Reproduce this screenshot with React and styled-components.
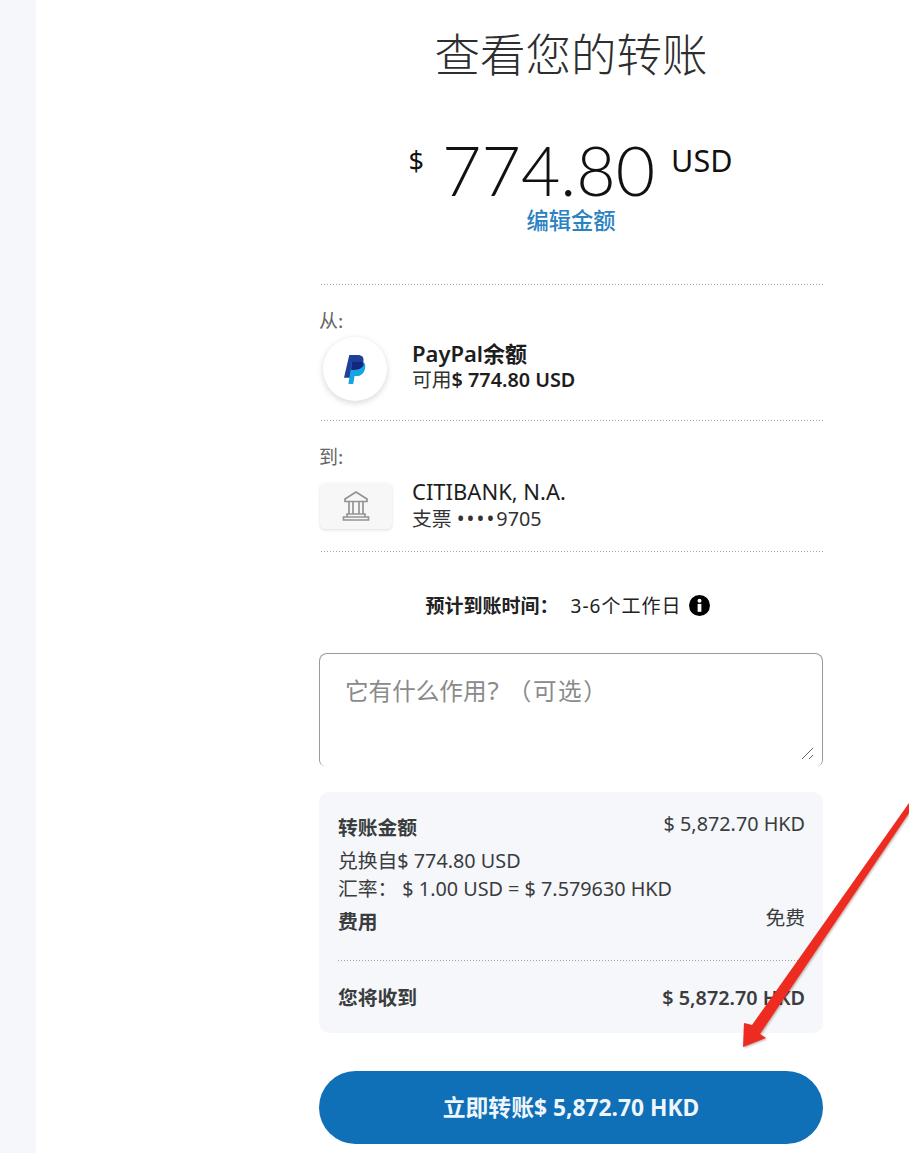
import React from "react";
import styled, { createGlobalStyle } from "styled-components";

const Global = createGlobalStyle`
  html, body { margin: 0; padding: 0; background: #fff; }
  body { font-family: "Noto Sans", "Noto Sans CJK SC", sans-serif; color: #2c2e2f; }
`;
const Page = styled.div`
  position: relative; width: 909px; height: 1153px; overflow: hidden;
  display: flex; background: #fff;
`;
const Rail = styled.div`width: 36px; background: #f5f7fa; flex: none;`;
const Column = styled.main`
  width: 504px; margin-left: 283px; display: flex; flex-direction: column;
`;
const Title = styled.h1`
  margin: 22px 0 0; height: 60px; font: 300 45.500px/60px "Noto Sans CJK SC", sans-serif;
  text-align: center; color: #2c2e2f;
`;
const Amount = styled.div`
  margin-top: 48px; height: 76px; display: flex; justify-content: center; align-items: flex-start;
  color: #111; padding-right: 3px;
`;
const Currency = styled.span`font: 400 27px/30px "Noto Sans", sans-serif; margin-top: 16px; margin-left: 2px;`;
const Digits = styled.span`font: 300 68px/60px Lato, sans-serif; margin: 10px 16px 0 18px;`;
const Code = styled.span`font: 400 30.500px/30px "Noto Sans", sans-serif; margin-top: 15px;`;
const EditLink = styled.a`
  text-align: center; font: 500 22.300px/24px "Noto Sans CJK SC", sans-serif; color: #2a82c2; margin-top: 1px;
`;
const Divider = styled.div`
  height: 1px; margin: ${p => p.$top}px 0 0 2px;
  background: repeating-linear-gradient(90deg, #a6a6a6 0 1.500px, transparent 1.500px 3px);
`;
const Label = styled.div`
  font: 400 19px/22px "Noto Sans CJK SC", sans-serif; color: #666; margin-top: ${p => p.$top}px; height: 22px;
`;
const Party = styled.div`display: flex; align-items: center; margin-top: ${p => p.$top}px;`;
const LogoCircle = styled.div`
  width: 64px; height: 64px; border-radius: 50%; background: #fff; margin-left: 4px; margin-right: 25px;
  box-shadow: 0 2px 6px rgba(0,0,0,.16); display: flex; align-items: center; justify-content: center; flex: none;
`;
const BankTile = styled.div`
  width: 72px; height: 46px; border-radius: 5px; background: #f7f7f7; margin-left: 1px; margin-right: 20px;
  box-shadow: 0 1px 3px rgba(0,0,0,.14); display: flex; align-items: center; justify-content: center; flex: none;
`;
const PartyText = styled.div`display: flex; flex-direction: column; padding-bottom: ${p => p.$pad}px;`;
const PartyName = styled.div`
  font: ${p => p.$bold ? 600 : 400} 22px/28px "Noto Sans", "Noto Sans CJK SC", sans-serif; color: #1d1d1d;
`;
const PartySub = styled.div`
  font: 400 19.800px/26px "Noto Sans", "Noto Sans CJK SC", sans-serif; color: #333;
  b { font-weight: 600; color: #1d1d1d; }
`;
const Mask = styled.span`font-size: 21px; letter-spacing: 2px;`;
const Eta = styled.div`
  margin-top: 39px; height: 30px; display: flex; align-items: center; justify-content: center; padding-right: 6px;
  font: 400 19px/30px "Noto Sans", "Noto Sans CJK SC", sans-serif; color: #222;
  b { font-weight: 700; margin-right: 12px; }
  svg { margin-left: 8px; margin-bottom: 2px; }
`;
const EtaValue = styled.span`letter-spacing: 1px;`;
const NoteBox = styled.div`
  position: relative; margin-top: 32px; height: 113px; border: 1px solid #9a9a9a; border-bottom: 0;
  border-radius: 8px 8px 6px 6px; padding: 21px 25px 0; box-sizing: border-box;
  font: 400 23.600px/30px "Noto Sans", "Noto Sans CJK SC", sans-serif; color: #8a8a8a;
`;
const Question = styled.span`font-size: 26px; margin-left: 1px;`;
const Optional = styled.span`letter-spacing: 1.500px; margin-left: 9px;`;
const Grip = styled.svg`position: absolute; right: 7px; bottom: 6px;`;
const Summary = styled.section`
  margin-top: 26px; height: 241px; background: #f5f7fa; border-radius: 10px; padding: 21px 18px 0 19px;
  box-sizing: border-box; display: flex; flex-direction: column; color: #3a3c3e;
  font: 400 19.800px/29px "Noto Sans", "Noto Sans CJK SC", sans-serif;
`;
const Row = styled.div`
  display: flex; justify-content: space-between; height: ${p => p.$h || 29}px;
  font-weight: ${p => p.$bold ? 600 : 400};
`;
const RowEnd = styled.span`margin-top: ${p => p.$up || 0}px;`;
const SummaryRule = styled.div`
  height: 1px; margin: 24px 0 22px;
  background: repeating-linear-gradient(90deg, #a6a6a6 0 1.500px, transparent 1.500px 3px);
`;
const Strong = styled.span`font-weight: 600;`;
const Rate = styled.span`margin-left: 5px;`;
const PayButton = styled.button`
  margin-top: 38px; height: 73px; border: 0; border-radius: 37px; background: #0f6fb7; color: #eef6fc;
  font: 700 22.800px/73px "Noto Sans", "Noto Sans CJK SC", sans-serif; padding: 0; flex: none;
`;
const Arrow = styled.svg`
  position: absolute; left: 730px; top: 790px;
  filter: drop-shadow(1px 1px 1px rgba(90,40,30,.4));
`;

export default function App() {
  return (
    <Page>
      <Global />
      <Rail />
      <Column>
        <Title>查看您的转账</Title>
        <Amount>
          <Currency>$</Currency>
          <Digits>774.80</Digits>
          <Code>USD</Code>
        </Amount>
        <EditLink>编辑金额</EditLink>
        <Divider $top={53} />
        <Label $top={24}>从:</Label>
        <Party $top={6}>
          <LogoCircle>
            <svg width="22" height="29" viewBox="0 0 25 33">
              <path d="M6 0h9c6 0 8 3 7 8-1 6-5 9-11 9H9l-1.500 9H0z" fill="#1f3f98" />
              <path d="M9 7h9c5 0 7 3 6 8-1 6-5 9-10 9h-2l-1.500 9H5z" fill="#17a4e6" />
              <path d="M9 7h11c2 1 2.500 3 2 5-1.500 3-5 5-11 5H8z" fill="#13277f" />
            </svg>
          </LogoCircle>
          <PartyText $pad={6}>
            <PartyName $bold>PayPal余额</PartyName>
            <PartySub>可用<b>$ 774.80 USD</b></PartySub>
          </PartyText>
        </Party>
        <Divider $top={19} />
        <Label $top={24}>到:</Label>
        <Party $top={10}>
          <BankTile>
            <svg width="28" height="32" viewBox="0 0 28 32" fill="none" stroke="#949494" strokeWidth="1.700">
              <path d="M14 2 3 9v2.500h22V9z" />
              <path d="M7 11.500V24M11 11.500V24M17 11.500V24M21 11.500V24" />
              <path d="M5 24h18v3H5zM1.500 27h25v3h-25z" />
            </svg>
          </BankTile>
          <PartyText $pad={2}>
            <PartyName>CITIBANK, N.A.</PartyName>
            <PartySub>支票 <Mask>••••</Mask>9705</PartySub>
          </PartyText>
        </Party>
        <Divider $top={17} />
        <Eta>
          <b>预计到账时间：</b><EtaValue>3-6个工作日</EtaValue>
          <svg width="21" height="21" viewBox="0 0 20 20">
            <circle cx="10" cy="10" r="10" fill="#000" />
            <rect x="8.200" y="8.500" width="3.600" height="7.500" fill="#fff" />
            <circle cx="10" cy="5.500" r="1.900" fill="#fff" />
          </svg>
        </Eta>
        <NoteBox>
          它有什么作用<Question>?</Question><Optional>（可选）</Optional>
          <Grip width="14" height="14" viewBox="0 0 14 14" stroke="#666" fill="none">
            <path d="M1 13 12 2M8 13l4-4" />
          </Grip>
        </NoteBox>
        <Summary>
          <Row $h={33}>
            <Strong>转账金额</Strong>
            <RowEnd $up={-4}>$ 5,872.70 HKD</RowEnd>
          </Row>
          <Row $h={28}><span>兑换自$ 774.80 USD</span></Row>
          <Row $h={33}><span>汇率：<Rate>$ 1.00 USD = $ 7.579630 HKD</Rate></span></Row>
          <Row>
            <Strong>费用</Strong>
            <RowEnd $up={-4}>免费</RowEnd>
          </Row>
          <SummaryRule />
          <Row $bold>
            <span>您将收到</span>
            <span>$ 5,872.70 HKD</span>
          </Row>
        </Summary>
        <PayButton>立即转账$ 5,872.70 HKD</PayButton>
      </Column>
      <Arrow width="180" height="270" viewBox="0 0 180 270">
        <path d="M179 13v10L30 244l6 4-23 9 1-24 8 2z" fill="#ee2b20" />
      </Arrow>
    </Page>
  );
}
